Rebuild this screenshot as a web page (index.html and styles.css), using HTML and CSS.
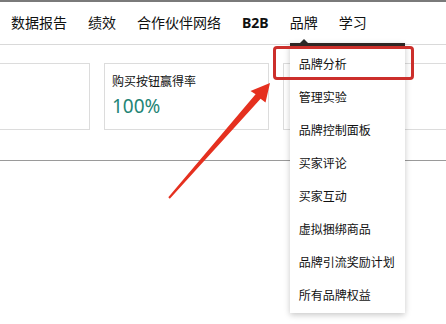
FILE: index.html
```html
<!DOCTYPE html>
<html lang="zh-CN">
<head>
    <meta charset="UTF-8">
    <meta name="viewport" content="width=device-width, initial-scale=1.0">
    <title>品牌分析</title>
    <link rel="stylesheet" href="styles.css">
</head>
<body>
    <div class="page">
        <nav class="top-nav">
            <div class="nav-item">数据报告</div>
            <div class="nav-item">绩效</div>
            <div class="nav-item">合作伙伴网络</div>
            <div class="nav-item nav-bold">B2B</div>
            <div class="nav-item nav-open">
                品牌
                <span class="caret"></span>
                <ul class="dropdown">
                    <li>品牌分析</li>
                    <li>管理实验</li>
                    <li>品牌控制面板</li>
                    <li>买家评论</li>
                    <li>买家互动</li>
                    <li>虚拟捆绑商品</li>
                    <li>品牌引流奖励计划</li>
                    <li>所有品牌权益</li>
                </ul>
            </div>
            <div class="nav-item">学习</div>
        </nav>

        <section class="metrics">
            <div class="metrics-row">
                <div class="metric-card"></div>
                <div class="metric-card">
                    <div class="metric-label">购买按钮赢得率</div>
                    <div class="metric-value">100%</div>
                </div>
                <div class="metric-card"></div>
            </div>
        </section>
    </div>

    <!-- annotation overlay -->
    <div class="highlight-box"></div>
    <svg class="arrow" width="446" height="324" viewBox="0 0 446 324">
        <polygon points="270,83 265.5,102.5 260.6,98.8 169.8,198.7 168.3,197.3 255.6,94.3 250.5,91" fill="#e5301f"/>
    </svg>
</body>
</html>
```

FILE: styles.css
```css
* {
    margin: 0;
    padding: 0;
    box-sizing: border-box;
}

body {
    font-family: "Noto Sans", "Noto Sans CJK SC", sans-serif;
    background: #fff;
    color: #0f1111;
    width: 446px;
    height: 324px;
    overflow: hidden;
    position: relative;
}

.page {
    border-top: 2px solid #7a7a7a;
}

.top-nav {
    display: flex;
    gap: 21px;
    height: 43px;
    padding-left: 11px;
    border-bottom: 1px solid #d9d9d9;
    font-size: 14px;
    line-height: 42px;
}

.nav-item {
    position: relative;
    white-space: nowrap;
}

.nav-bold {
    font-weight: bold;
    font-family: "Noto Sans", sans-serif;
}

.caret {
    position: absolute;
    left: 9px;
    top: 37px;
    width: 0;
    height: 0;
    border-left: 5px solid transparent;
    border-right: 5px solid transparent;
    border-bottom: 5px solid #2a2a2a;
}

.dropdown {
    position: absolute;
    top: 41px;
    left: 0;
    width: 115px;
    list-style: none;
    background: #fff;
    border-top: 3px solid #2e2624;
    box-shadow: 0 2px 6px rgba(0, 0, 0, 0.22);
    padding: 2px 0 1px;
    z-index: 5;
}

.dropdown li {
    font-size: 12px;
    line-height: 33px;
    padding-left: 9px;
    color: #111;
}

.metrics {
    overflow: hidden;
    padding: 18px 0 30px;
    border-bottom: 1px solid #9a9a9a;
}

.metrics-row {
    display: flex;
    gap: 14px;
    margin-left: -75px;
}

.metric-card {
    flex: 0 0 165px;
    height: 67px;
    border: 1px solid #dcdcdc;
    padding: 8px 7px;
}

.metric-label {
    font-size: 12px;
    line-height: 20px;
}

.metric-value {
    font-size: 19px;
    line-height: 28px;
    color: #1f8576;
}

.highlight-box {
    position: absolute;
    left: 273px;
    top: 46px;
    width: 141px;
    height: 34px;
    border: 3px solid #cc2f2b;
    border-radius: 4px;
    z-index: 10;
}

.arrow {
    position: absolute;
    left: 0;
    top: 0;
    z-index: 11;
    pointer-events: none;
}
```
